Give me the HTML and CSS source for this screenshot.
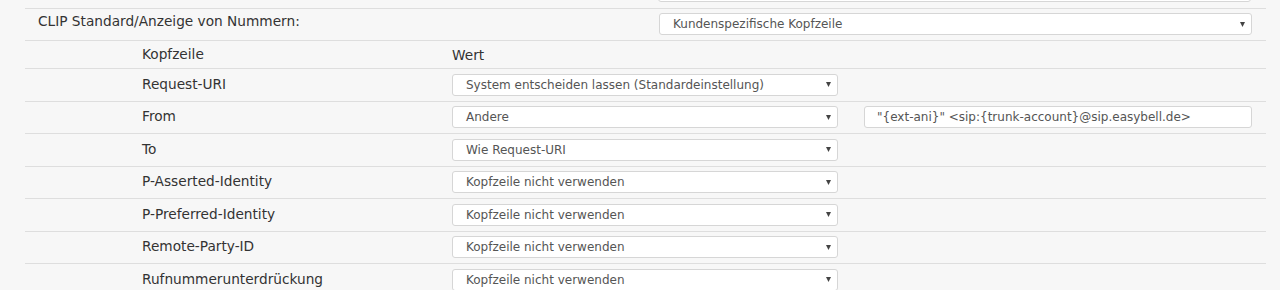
FILE: index.html
```html
<!DOCTYPE html>
<html lang="de">
<head>
  <meta charset="UTF-8" />
  <meta name="viewport" content="width=device-width, initial-scale=1" />
  <title>SIP Kopfzeilen</title>
  <link rel="stylesheet" href="styles.css">
</head>
<body>

  <div class="panel">

    <div class="row row-cut">
      <div class="select select-wide">
        <span class="select-text">&nbsp;</span>
        <svg class="caret" width="5" height="5" viewBox="0 0 5 5"><path d="M0 0h5L2.5 5z"/></svg>
      </div>
    </div>

    <div class="row row-clip">
      <div class="clip-label">CLIP Standard/Anzeige von Nummern:</div>
      <div class="select select-wide">
        <span class="select-text">Kundenspezifische Kopfzeile</span>
        <svg class="caret" width="5" height="5" viewBox="0 0 5 5"><path d="M0 0h5L2.5 5z"/></svg>
      </div>
    </div>

    <div class="row row-head">
      <div class="col-label">Kopfzeile</div>
      <div class="col-value">Wert</div>
    </div>

    <div class="row row-header">
      <div class="col-label">Request-URI</div>
      <div class="col-value">
        <div class="select">
          <span class="select-text">System entscheiden lassen (Standardeinstellung)</span>
          <svg class="caret" width="5" height="5" viewBox="0 0 5 5"><path d="M0 0h5L2.5 5z"/></svg>
        </div>
      </div>
    </div>

    <div class="row row-header">
      <div class="col-label">From</div>
      <div class="col-value">
        <div class="select">
          <span class="select-text">Andere</span>
          <svg class="caret" width="5" height="5" viewBox="0 0 5 5"><path d="M0 0h5L2.5 5z"/></svg>
        </div>
      </div>
      <div class="col-extra">
        <div class="text-input">"{ext-ani}" &lt;sip:{trunk-account}@sip.easybell.de&gt;</div>
      </div>
    </div>

    <div class="row row-header">
      <div class="col-label">To</div>
      <div class="col-value">
        <div class="select">
          <span class="select-text">Wie Request-URI</span>
          <svg class="caret" width="5" height="5" viewBox="0 0 5 5"><path d="M0 0h5L2.5 5z"/></svg>
        </div>
      </div>
    </div>

    <div class="row row-header">
      <div class="col-label">P-Asserted-Identity</div>
      <div class="col-value">
        <div class="select">
          <span class="select-text">Kopfzeile nicht verwenden</span>
          <svg class="caret" width="5" height="5" viewBox="0 0 5 5"><path d="M0 0h5L2.5 5z"/></svg>
        </div>
      </div>
    </div>

    <div class="row row-header">
      <div class="col-label">P-Preferred-Identity</div>
      <div class="col-value">
        <div class="select">
          <span class="select-text">Kopfzeile nicht verwenden</span>
          <svg class="caret" width="5" height="5" viewBox="0 0 5 5"><path d="M0 0h5L2.5 5z"/></svg>
        </div>
      </div>
    </div>

    <div class="row row-header">
      <div class="col-label">Remote-Party-ID</div>
      <div class="col-value">
        <div class="select">
          <span class="select-text">Kopfzeile nicht verwenden</span>
          <svg class="caret" width="5" height="5" viewBox="0 0 5 5"><path d="M0 0h5L2.5 5z"/></svg>
        </div>
      </div>
    </div>

    <div class="row row-header">
      <div class="col-label">Rufnummerunterdrückung</div>
      <div class="col-value">
        <div class="select">
          <span class="select-text">Kopfzeile nicht verwenden</span>
          <svg class="caret" width="5" height="5" viewBox="0 0 5 5"><path d="M0 0h5L2.5 5z"/></svg>
        </div>
      </div>
    </div>

  </div>

</body>
</html>
```

FILE: styles.css
```css
html, body {
  height: 100%;
}

body {
  margin: 0;
  font-family: "DejaVu Sans", Verdana, sans-serif;
  background-color: #f7f7f7;
  color: #333333;
  overflow: hidden;
}

.panel {
  margin-left: 25px;
  width: 1241px;
}

.row {
  display: flex;
  align-items: center;
  border-bottom: 1px solid #dedede;
  box-sizing: border-box;
}

/* cut-off select from the block above */
.row-cut {
  height: 9px;
  overflow: hidden;
  align-items: flex-start;
  padding-left: 633px;
}

.row-cut .select {
  margin-top: -20px;
}

.row-clip {
  height: 32px;
  padding-left: 13px;
  align-items: flex-start;
}

.clip-label {
  width: 621px;
  font-size: 13.7px;
  padding-top: 4px;
}

.row-clip .select {
  margin-top: 4px;
}

.row-head {
  height: 28px;
  padding-left: 117px;
  font-size: 13.7px;
}

.row-header {
  height: 32.5px;
  padding-left: 117px;
  font-size: 13.7px;
}

.col-label {
  width: 310px;
  margin-top: -2px;
}

.col-value {
  width: 412px;
}

.col-extra {
  width: 388px;
}

.select {
  display: flex;
  align-items: center;
  justify-content: space-between;
  width: 386px;
  height: 22px;
  box-sizing: border-box;
  padding: 0 6px 0 13px;
  background-color: #ffffff;
  border: 1px solid #d6d6d6;
  border-radius: 3px;
  font-size: 12px;
  color: #555555;
}

.select-wide {
  width: 593px;
}

.caret {
  fill: #444444;
  flex-shrink: 0;
}

.text-input {
  width: 388px;
  height: 22px;
  box-sizing: border-box;
  padding: 0 12px;
  line-height: 20px;
  background-color: #ffffff;
  border: 1px solid #d6d6d6;
  border-radius: 3px;
  font-size: 12px;
  color: #555555;
  white-space: nowrap;
}
```
